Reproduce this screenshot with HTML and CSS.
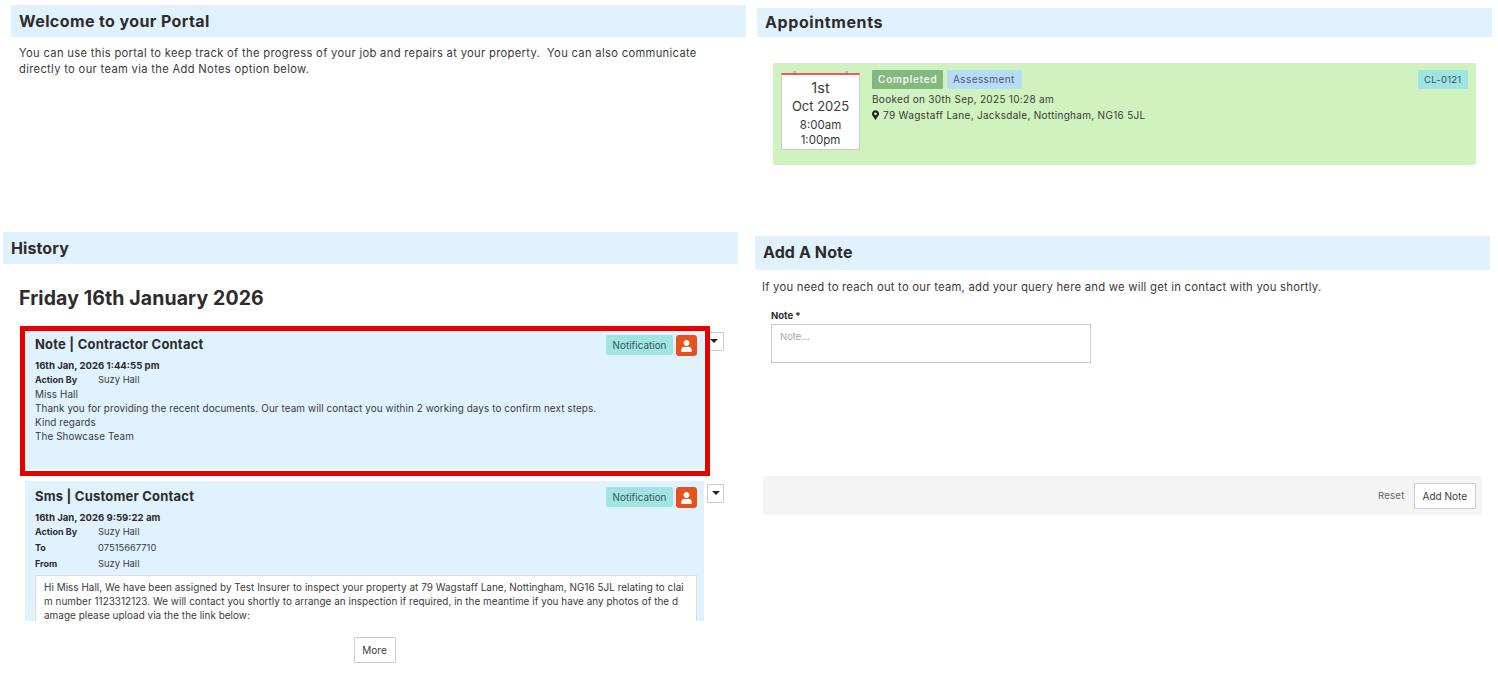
FILE: index.html
```html
<!DOCTYPE html>
<html>
<head>
<title>Portal</title>
<link rel="stylesheet" href="styles.css">
</head>
<body>
<div class="page">

	<section class="welcome">
		<h2 class="band welcome-band">Welcome to your Portal</h2>
		<p class="intro">You can use this portal to keep track of the progress of your job and repairs at your property.&nbsp; You can also communicate directly to our team via the Add Notes option below.</p>
	</section>

	<section class="appts">
		<h2 class="band appts-band">Appointments</h2>
		<div class="appt">
			<div class="cal">
				<div class="cal-day">1st</div>
				<div class="cal-month">Oct 2025</div>
				<div class="cal-time">8:00am</div>
				<div class="cal-time">1:00pm</div>
			</div>
			<div class="appt-info">
				<div class="badges">
					<span class="badge done">Completed</span>
					<span class="badge kind">Assessment</span>
					<span class="badge ref">CL-0121</span>
				</div>
				<div class="appt-line">Booked on 30th Sep, 2025 10:28 am</div>
				<div class="appt-line">
					<svg class="pin" viewBox="0 0 384 512"><path d="M172.268 501.67C26.97 291.031 0 269.413 0 192 0 85.961 85.961 0 192 0s192 85.961 192 192c0 77.413-26.97 99.031-172.268 309.67-9.535 13.774-29.93 13.773-39.464 0zM192 272c44.183 0 80-35.817 80-80s-35.817-80-80-80-80 35.817-80 80 35.817 80 80 80z"/></svg>
					79 Wagstaff Lane, Jacksdale, Nottingham, NG16 5JL
				</div>
			</div>
		</div>
	</section>

	<section class="history">
		<h2 class="band history-band">History</h2>
		<h1 class="day">Friday 16th January 2026</h1>
		<div class="feed">
			<div class="row first">
				<div class="card note">
					<div class="card-top">
						<h3>Note | Contractor Contact</h3>
						<span class="notif">Notification</span>
						<span class="avatar"><svg viewBox="0 0 448 512"><path d="M224 256c70.7 0 128-57.3 128-128S294.7 0 224 0 96 57.3 96 128s57.3 128 128 128zm89.6 32h-16.7c-22.2 10.2-46.9 16-72.9 16s-50.6-5.8-72.9-16h-16.7C60.2 288 0 348.2 0 422.4V464c0 26.5 21.5 48 48 48h352c26.5 0 48-21.5 48-48v-41.6c0-74.2-60.2-134.4-134.4-134.4z"/></svg></span>
					</div>
					<div class="stamp">16th Jan, 2026 1:44:55 pm</div>
					<div class="meta"><b>Action By</b><span>Suzy Hall</span></div>
					<div class="msg">Miss Hall</div>
					<div class="msg">Thank you for providing the recent documents. Our team will contact you within 2 working days to confirm next steps.</div>
					<div class="msg">Kind regards</div>
					<div class="msg">The Showcase Team</div>
				</div>
				<button class="caret"></button>
				<div class="highlight"></div>
			</div>
			<div class="row">
				<div class="card">
					<div class="card-top">
						<h3>Sms | Customer Contact</h3>
						<span class="notif">Notification</span>
						<span class="avatar"><svg viewBox="0 0 448 512"><path d="M224 256c70.7 0 128-57.3 128-128S294.7 0 224 0 96 57.3 96 128s57.3 128 128 128zm89.6 32h-16.7c-22.2 10.2-46.9 16-72.9 16s-50.6-5.8-72.9-16h-16.7C60.2 288 0 348.2 0 422.4V464c0 26.5 21.5 48 48 48h352c26.5 0 48-21.5 48-48v-41.6c0-74.2-60.2-134.4-134.4-134.4z"/></svg></span>
					</div>
					<div class="stamp">16th Jan, 2026 9:59:22 am</div>
					<div class="meta tall"><b>Action By</b><span>Suzy Hall</span></div>
					<div class="meta tall"><b>To</b><span>07515667710</span></div>
					<div class="meta tall"><b>From</b><span>Suzy Hall</span></div>
					<div class="sms">Hi Miss Hall, We have been assigned by Test Insurer to inspect your property at 79 Wagstaff Lane, Nottingham, NG16 5JL relating to clai<br>m number 1123312123. We will contact you shortly to arrange an inspection if required, in the meantime if you have any photos of the d<br>amage please upload via the the link below:</div>
				</div>
				<button class="caret"></button>
			</div>
		</div>
		<div class="more-wrap"><button class="btn more">More</button></div>
	</section>

	<section class="add">
		<h2 class="band add-band">Add A Note</h2>
		<p class="add-text">If you need to reach out to our team, add your query here and we will get in contact with you shortly.</p>
		<label class="note-label" for="note">Note *</label>
		<textarea class="note-box" id="note" placeholder="Note..."></textarea>
		<div class="form-foot">
			<a class="reset">Reset</a>
			<button class="btn">Add Note</button>
		</div>
	</section>

</div>
</body>
</html>
```

FILE: styles.css
```css
html, body { margin: 0; padding: 0; background: #fff; overflow: hidden; }
body { font-family: Inter, "Liberation Sans", sans-serif; color: #3a3a3a; font-size: 10px; }
h1, h2, h3, p { margin: 0; }

.page { display: grid; grid-template-columns: 750px 748px; grid-template-rows: 228px 447px; height: 675px; }

.band { background: #e0f2fe; font-size: 16px; font-weight: 700; color: #2e2b2a; display: flex; align-items: center; padding-left: 8px; letter-spacing: 0.1px; box-sizing: border-box; }

/* top left */
.welcome { padding: 5px 4px 0 11px; }
.welcome-band { height: 32px; letter-spacing: 0.4px; padding-bottom: 1px; }
.intro { font-size: 11.2px; line-height: 16px; margin: 8px 0 0 8px; width: 690px; letter-spacing: 0.32px; }

/* top right */
.appts { padding: 8px 6px 0 7px; }
.appts-band { height: 29px; letter-spacing: 0.6px; padding-bottom: 2px; }
.appt { background: #cff2bf; margin: 26px 16px 0 16px; height: 102px; padding: 7px 8px 0 8px; box-sizing: border-box; display: flex; gap: 12px; border-radius: 2px; }
.cal { width: 79px; height: 77px; box-sizing: border-box; background: #fff; border: 1px solid #ccc; border-top: 2px solid #ee5a5a; margin-top: 3px; text-align: center; position: relative; padding-top: 3px; }
.cal::before, .cal::after { content: ""; position: absolute; top: -4px; width: 3px; height: 2px; background: #bbb; }
.cal::before { left: 11px; }
.cal::after { right: 11px; }
.cal-day { font-size: 14.5px; line-height: 19px; }
.cal-month { font-size: 13px; line-height: 18px; margin-bottom: 3px; }
.cal-time { font-size: 11.5px; line-height: 15px; }
.appt-info { flex: 1; }
.badges { display: flex; gap: 4px; }
.badge { height: 19px; line-height: 19px; padding: 0 6px; font-size: 10px; border-radius: 1px; white-space: nowrap; }
.done { background: #83b97f; color: #fff; font-weight: 500; width: 59px; letter-spacing: 0.8px; }
.kind { background: #b8dcf5; color: #4a5878; width: 63px; letter-spacing: 0.4px; }
.ref { background: #a0e3e3; color: #3a5560; margin-left: auto; width: 38px; font-size: 9.6px; letter-spacing: 0.2px; }
.appt-line { font-size: 10px; line-height: 16px; margin-top: 2px; letter-spacing: 0.3px; }
.appt-line + .appt-line { margin-top: 0; }
.pin { width: 7px; height: 10px; vertical-align: -1px; margin-right: 1px; fill: #222; }

/* bottom left */
.history { padding: 4px 12px 0 3px; }
.history-band { height: 32px; }
.day { font-size: 19.5px; font-weight: 700; color: #2e2b2a; margin: 22px 0 0 16px; line-height: 24px; letter-spacing: 0.1px; }
.feed { height: 297px; margin: 14px 0 0 17px; padding: 7px 0 0 5px; box-sizing: border-box; overflow: hidden; }
.row { display: flex; position: relative; margin-bottom: 12px; }
.card { width: 679px; background: #e0f2fe; padding: 6px 7px 0 10px; box-sizing: border-box; flex: none; }
.note { height: 138px; padding-top: 4px; }
.card-top { display: flex; align-items: center; height: 21px; }
.card-top h3 { font-size: 13px; font-weight: 700; color: #2e2b2a; flex: 1; letter-spacing: 0.2px; margin-bottom: 3px; }
.notif { background: #a0e3e3; color: #3a5560; font-size: 9.8px; height: 20px; line-height: 21px; width: 67px; text-align: center; border-radius: 2px; margin-right: 3px; letter-spacing: 0.05px; align-self: flex-start; }
.avatar { width: 21px; height: 21px; background: #e8501c; border-radius: 3px; display: flex; align-items: center; justify-content: center; }
.avatar svg { width: 11px; height: 12px; fill: #fff; }
.stamp { font-size: 9.6px; font-weight: 700; line-height: 13px; margin-top: 3px; color: #2e2b2a; }
.meta { display: flex; line-height: 14px; }
.note .meta { padding-top: 1px; }
.meta b { width: 63px; font-size: 9px; color: #2e2b2a; }
.meta span { font-size: 9.4px; }
.tall { line-height: 16px; }
.msg { font-size: 9.9px; line-height: 14px; letter-spacing: 0.1px; }
.sms { background: #fff; border: 1px solid #ddd; margin: 3px 0 0 0; padding: 4px 8px; font-size: 9.9px; line-height: 14px; letter-spacing: 0.05px; width: 662px; box-sizing: border-box; height: 60px; white-space: nowrap; }
.caret { width: 17px; height: 19px; background: #fff; border: 1px solid #ccc; padding: 0; margin: 3px 0 0 3px; position: relative; border-radius: 1px; }
.caret::after { content: ""; position: absolute; left: 4px; top: 6px; border: 4px solid transparent; border-top-color: #222; border-bottom: 0; }
.first .caret { margin-top: 1px; width: 19px; margin-left: 1px; }
.highlight { position: absolute; left: -5px; top: -5px; width: 680px; height: 140px; border: 5px solid #e60000; pointer-events: none; }

.more-wrap { display: flex; justify-content: center; padding: 16px 0 0 8px; }
.btn { font-family: inherit; font-size: 10px; color: #3a3a3a; background: #fff; border: 1px solid #ccc; height: 26px; padding: 0 8px; border-radius: 1px; }
.more { width: 42px; padding: 0; }

/* bottom right */
.add { padding: 8px 8px 0 5px; }
.add-band { height: 34px; padding-bottom: 2px; }
.add-text { font-size: 11.3px; line-height: 16px; margin: 9px 0 0 7px; letter-spacing: 0.23px; }
.note-label { display: block; font-size: 9.5px; font-weight: 700; line-height: 12px; margin: 15px 0 0 16px; color: #2e2b2a; }
.note-box { display: block; width: 320px; height: 39px; box-sizing: border-box; margin: 2px 0 0 16px; border: 1px solid #ccc; padding: 6px 8px; font-family: inherit; font-size: 9.5px; resize: none; outline: none; }
.note-box::placeholder { color: #a8a8a8; }
.form-foot { background: #f4f4f4; height: 39px; margin: 113px 8px 0 8px; padding-right: 6px; display: flex; align-items: center; justify-content: flex-end; gap: 9px; }
.reset { font-size: 9.6px; color: #666; letter-spacing: 0.2px; }
```
